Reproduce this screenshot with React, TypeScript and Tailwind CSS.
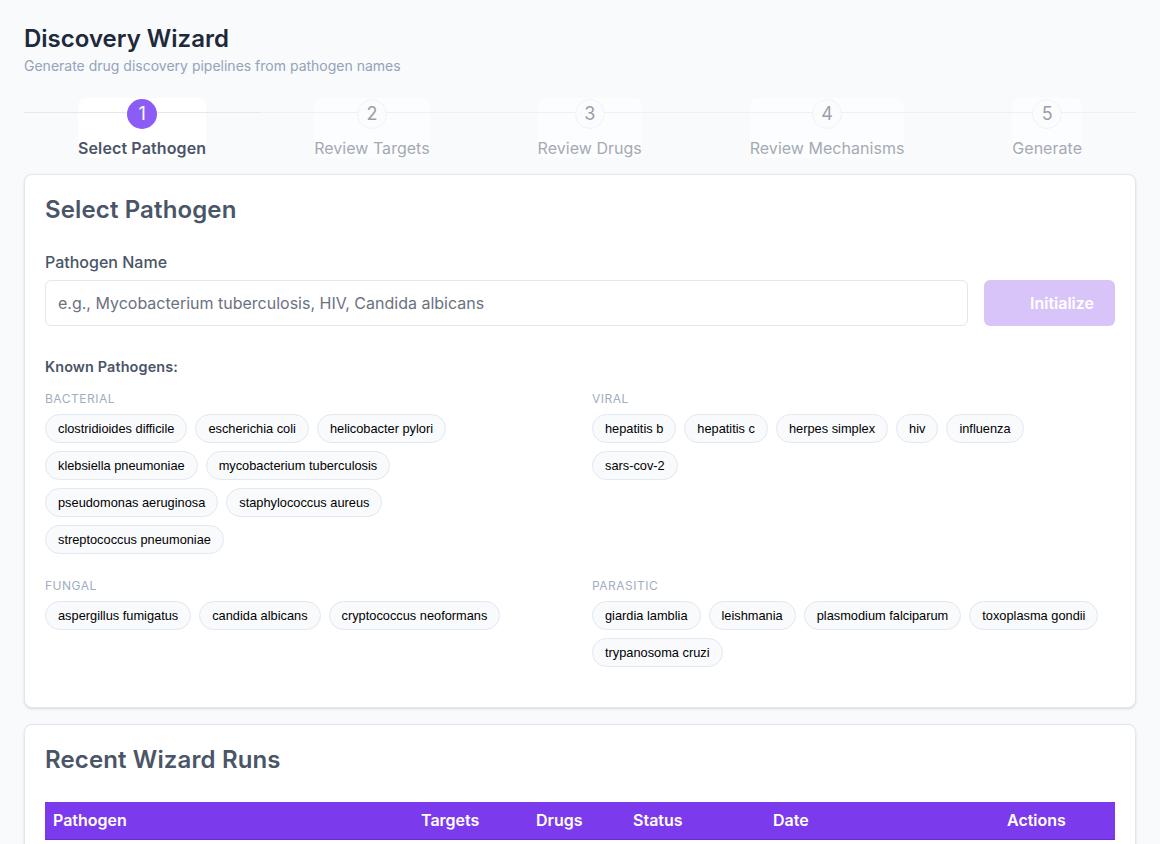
const bacterial = [
  'clostridioides difficile',
  'escherichia coli',
  'helicobacter pylori',
  'klebsiella pneumoniae',
  'mycobacterium tuberculosis',
  'pseudomonas aeruginosa',
  'staphylococcus aureus',
  'streptococcus pneumoniae',
];
const viral = ['hepatitis b', 'hepatitis c', 'herpes simplex', 'hiv', 'influenza', 'sars-cov-2'];
const fungal = ['aspergillus fumigatus', 'candida albicans', 'cryptococcus neoformans'];
const parasitic = ['giardia lamblia', 'leishmania', 'plasmodium falciparum', 'toxoplasma gondii', 'trypanosoma cruzi'];

const steps = ['Select Pathogen', 'Review Targets', 'Review Drugs', 'Review Mechanisms', 'Generate'];

function Group({ title, items }: { title: string; items: string[] }) {
  return (
    <div>
      <div className="mb-2 text-xs leading-[15px] tracking-[0.5px] uppercase text-[#a0aec0]">{title}</div>
      <div className="flex flex-wrap gap-2">
        {items.map((item) => (
          <button
            key={item}
            type="button"
            className="h-[29px] rounded-full border border-[#e2e8f0] bg-[#f8fafc] px-3 font-['Liberation_Sans',sans-serif] text-[12.8px] text-black"
          >
            {item}
          </button>
        ))}
      </div>
    </div>
  );
}

export default function App() {
  return (
    <div className="h-[844px] overflow-hidden bg-[#f8fafc] px-6 pt-6 font-['Inter',sans-serif]">
      <h1 className="text-2xl leading-[29px] font-semibold text-[#1e293b]">Discovery Wizard</h1>
      <p className="mt-1 text-sm leading-[17px] text-[#94a3b8]">Generate drug discovery pipelines from pathogen names</p>

      <div className="relative mt-6 mb-4 flex justify-around">
        {/* base line sits above the step cards, below the circles */}
        <div className="absolute top-[14px] right-0 left-0 z-[1] h-px bg-[#eef0f4]" />
        <div className="absolute top-[14px] left-0 z-[1] h-px w-[236px] bg-[#e5e7eb]" />
        {steps.map((step, i) => (
          <div key={step} className={`flex flex-col items-center rounded-lg ${i === 0 ? 'bg-white' : 'bg-white/50'}`}>
            <div
              className={`relative z-[2] mt-px flex h-[30px] w-[30px] items-center justify-center rounded-full text-lg ${
                i === 0 ? 'bg-[#8b5cf6] text-white' : 'border border-[#f0f3f7] bg-[#fbfcfd] text-[#9a9fa9]'
              }`}
            >
              {i + 1}
            </div>
            <div
              className={`mt-[9px] text-base leading-[20px] ${
                i === 0 ? 'font-semibold tracking-[0.13px] text-[#4a5568]' : 'tracking-[0.03px] text-[#a4aab3]'
              }`}
            >
              {step}
            </div>
          </div>
        ))}
      </div>

      <div className="rounded-lg border border-[#e2e8f0] bg-white px-5 pt-5 pb-10 shadow-sm">
        <h2 className="text-2xl leading-[29px] font-semibold tracking-[0.13px] text-[#4a5568]">Select Pathogen</h2>
        <label className="mt-[28px] block text-base leading-[20px] font-medium text-[#4a5568]">Pathogen Name</label>
        <div className="mt-2 flex gap-4">
          <input
            placeholder="e.g., Mycobacterium tuberculosis, HIV, Candida albicans"
            className="h-[46px] flex-1 rounded-md border border-[#e2e8f0] bg-white px-3 text-base text-[#4a5568] placeholder:text-[#6b7280]"
          />
          <button type="button" className="flex h-[46px] w-[131px] items-center justify-end rounded-md bg-[#d8c4f9] pr-[21px] text-base font-semibold text-white">
            Initialize
          </button>
        </div>

        <div className="mt-8 text-[14.4px] leading-[17px] font-semibold tracking-[0.13px] text-[#4a5568]">Known Pathogens:</div>
        <div className="mt-4 grid grid-cols-2 gap-x-6 gap-y-6">
          <Group title="Bacterial" items={bacterial} />
          <Group title="Viral" items={viral} />
          <Group title="Fungal" items={fungal} />
          <Group title="Parasitic" items={parasitic} />
        </div>
      </div>

      <div className="mt-4 rounded-lg border border-[#e2e8f0] bg-white px-5 pt-5 pb-10 shadow-sm">
        <h2 className="text-2xl leading-[29px] font-semibold tracking-[0.13px] text-[#4a5568]">Recent Wizard Runs</h2>
        <table className="mt-[28px] w-full border-collapse">
          <thead>
            <tr className="h-[37px] border-b border-[#6d28d9] bg-[#7c3aed] text-left text-base font-semibold text-white">
              <th className="w-[368px] pl-2 font-semibold">Pathogen</th>
              <th className="w-[115px] pl-2 font-semibold">Targets</th>
              <th className="w-[97px] pl-2 font-semibold">Drugs</th>
              <th className="w-[140px] pl-2 font-semibold">Status</th>
              <th className="w-[234px] pl-2 font-semibold">Date</th>
              <th className="pl-2 font-semibold">Actions</th>
            </tr>
          </thead>
        </table>
      </div>
    </div>
  );
}
